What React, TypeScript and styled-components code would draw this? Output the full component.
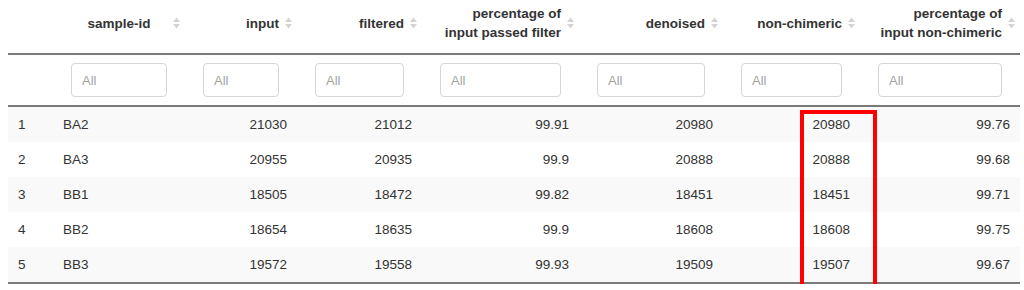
import React from "react";
import styled, { createGlobalStyle } from "styled-components";

const GlobalStyle = createGlobalStyle`
  body {
    margin: 0;
    background: #fff;
    overflow: hidden;
    font-family: "Liberation Sans", Arial, sans-serif;
    color: #333;
  }
`;

// layout

const Page = styled.div`
  position: relative;
  padding-left: 8px;
`;

const Table = styled.table`
  border-collapse: collapse;
  table-layout: fixed;
  width: 1012px;
  font-size: 13.5px;
`;

const HeadCell = styled.th`
  padding: 4px 5px 11px 18px;
  height: 38px;
  vertical-align: middle;
  font-weight: bold;
  line-height: 19px;
  border-bottom: 2px solid #7a7a7a;
`;

const HeadInner = styled.div`
  display: flex;
  align-items: center;
  gap: 6px;
`;

const HeadLabel = styled.span<{ $align: "center" | "right" }>`
  flex: 1;
  text-align: ${(p) => p.$align};
`;

const FilterCell = styled.td`
  padding: 8px 18px;
  border-bottom: 2px solid #7a7a7a;
`;

const FilterInput = styled.input`
  box-sizing: border-box;
  display: block;
  width: 100%;
  height: 34px;
  padding: 0 10px;
  border: 1px solid #d6d6d6;
  border-radius: 4px;
  font-family: "Liberation Sans", Arial, sans-serif;
  font-size: 13px;
  color: #555;
  background: #fff;

  &::placeholder {
    color: #a3a3a3;
  }
`;

const Row = styled.tr<{ $odd: boolean }>`
  background: ${(p) => (p.$odd ? "#f9f9f9" : "#fff")};

  & + & td {
    border-top: 1px solid #ddd;
  }

  &:last-child td {
    border-bottom: 2px solid #7a7a7a;
  }
`;

const Cell = styled.td<{ $right?: boolean }>`
  padding: 8px 10px;
  line-height: 19px;
  text-align: ${(p) => (p.$right ? "right" : "left")};
  white-space: nowrap;
`;

// annotation drawn over the table
const Highlight = styled.div`
  position: absolute;
  left: 800px;
  top: 110px;
  width: 77px;
  height: 179px;
  box-sizing: border-box;
  border: 4px solid #f00;
  pointer-events: none;
`;

const SortIcon = () => (
  <svg width="7" height="12" viewBox="0 0 7 12" style={{ flex: "none" }}>
    <path d="M0 5 L3.5 0.5 L7 5 Z" fill="#d4d4d4" />
    <path d="M0 7 L3.5 11.5 L7 7 Z" fill="#d4d4d4" />
  </svg>
);

const widths = [45, 132, 112, 125, 157, 144, 137, 160];

const columns: { title: React.ReactNode; align: "center" | "right" }[] = [
  { title: "sample-id", align: "center" },
  { title: "input", align: "right" },
  { title: "filtered", align: "right" },
  {
    title: (
      <>
        percentage of
        <br />
        input passed filter
      </>
    ),
    align: "right",
  },
  { title: "denoised", align: "right" },
  { title: "non-chimeric", align: "right" },
  {
    title: (
      <>
        percentage of
        <br />
        input non-chimeric
      </>
    ),
    align: "right",
  },
];

const rows: [string, number, number, string, number, number, string][] = [
  ["BA2", 21030, 21012, "99.91", 20980, 20980, "99.76"],
  ["BA3", 20955, 20935, "99.9", 20888, 20888, "99.68"],
  ["BB1", 18505, 18472, "99.82", 18451, 18451, "99.71"],
  ["BB2", 18654, 18635, "99.9", 18608, 18608, "99.75"],
  ["BB3", 19572, 19558, "99.93", 19509, 19507, "99.67"],
];

export default function App() {
  return (
    <Page>
      <GlobalStyle />
      <Table>
        <colgroup>
          {widths.map((w, i) => (
            <col key={i} style={{ width: w }} />
          ))}
        </colgroup>
        <thead>
          <tr>
            <HeadCell />
            {columns.map((c, i) => (
              <HeadCell key={i}>
                <HeadInner>
                  <HeadLabel $align={c.align}>{c.title}</HeadLabel>
                  <SortIcon />
                </HeadInner>
              </HeadCell>
            ))}
          </tr>
          <tr>
            <FilterCell />
            {columns.map((_, i) => (
              <FilterCell key={i}>
                <FilterInput placeholder="All" />
              </FilterCell>
            ))}
          </tr>
        </thead>
        <tbody>
          {rows.map((r, i) => (
            <Row key={i} $odd={i % 2 === 0}>
              <Cell>{i + 1}</Cell>
              <Cell>{r[0]}</Cell>
              {r.slice(1).map((v, j) => (
                <Cell key={j} $right>
                  {v}
                </Cell>
              ))}
            </Row>
          ))}
        </tbody>
      </Table>
      <Highlight />
    </Page>
  );
}
